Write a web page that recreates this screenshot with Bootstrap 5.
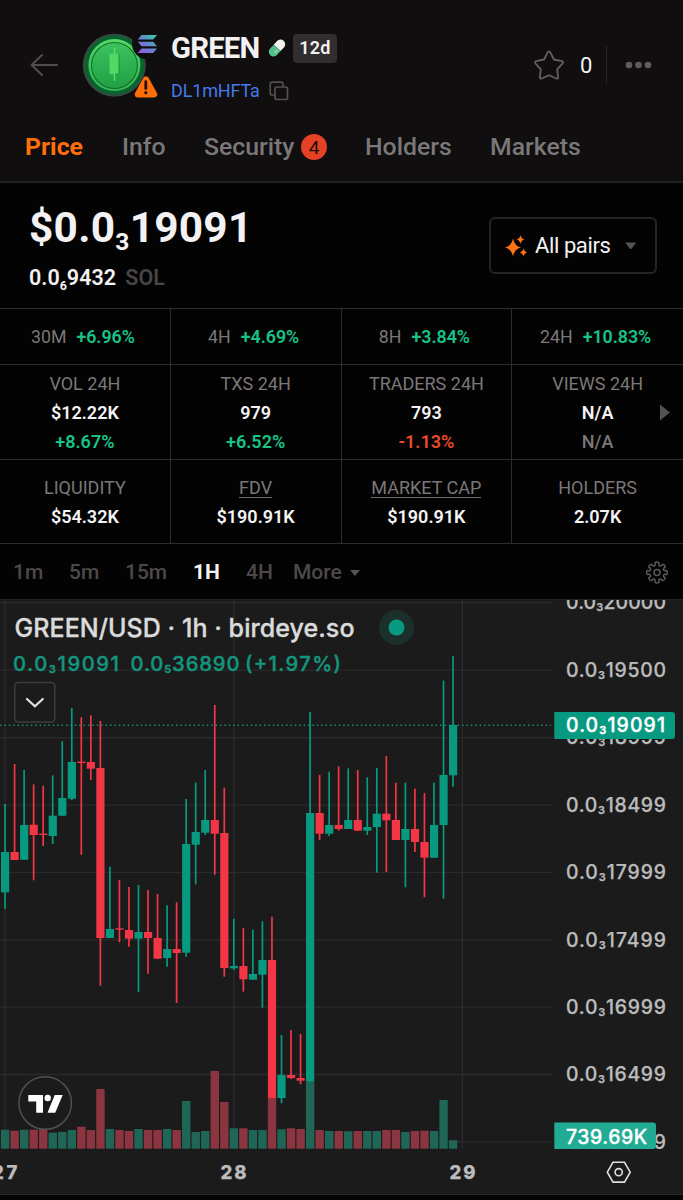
<!DOCTYPE html>
<html lang="en" data-bs-theme="dark">
<head>
<meta charset="utf-8">
<meta name="viewport" content="width=device-width, initial-scale=1">
<title>GREEN price</title>
<link href="https://cdn.jsdelivr.net/npm/bootstrap@5.3.0/dist/css/bootstrap.min.css" rel="stylesheet">
<style>
  body { background: #030303; color: #f3f1f2; font-family: Roboto, "Liberation Sans", sans-serif; height: 1200px; overflow: hidden; }
  svg { display: block; flex: none; }
  .fit { white-space: nowrap; line-height: 1; }
  .token-head { height: 183px; background: #100e0f; border-bottom: 2px solid #212020; }
  .head-row { height: 130px; padding: 0 30px; }
  .logo-box { width: 78px; height: 70px; margin-left: 23px; }
  .token-text { margin-left: 12px; height: 130px; padding-top: 33px; gap: 17px; }
  .token-name { font-size: 29.3px; font-weight: 700; letter-spacing: -.8px; width: 97px; padding-top: 2px; }
  .age { background: #332e2e; border-radius: 4px; width: 44px; height: 29px; font-size: 18px; font-weight: 600; letter-spacing: .2px; margin-left: 7px; }
  .addr { color: #4679ea; font-size: 18px; letter-spacing: -.15px; width: 98px; }
  .line-1 { height: 30px; } .line-2 { height: 21px; }
  .head-rule { width: 1px; height: 38px; background: #282626; }
  .tabs-row { height: 34px; padding-left: 25px; font-size: 24.8px; font-weight: 500; color: #7a7878; }
  .tabs-row > :not(.count) { padding-top: 1.5px; }
  .count { width: 26px; height: 26px; border-radius: 50%; background: #e64124; color: #1a0c09; font-size: 19px; font-weight: 400; }
  .price-block { height: 125px; padding: 0 26px 0 29px; }
  .price { font-size: 42.4px; font-weight: 700; letter-spacing: .25px; padding-top: 24px; }
  .price small, .sol-price small { font-size: .58em; position: relative; top: .33em; font-weight: 700; line-height: 0; }
  .sol-price { font-size: 21.5px; font-weight: 600; margin-top: 18px; }
  .sol-price span { color: #484546; margin-left: 4px; }
  .pairs { width: 168px; height: 57px; border: 2px solid #252323; border-radius: 6px; margin-top: 34px; padding: 0 19px 0 14px; font-size: 22px; color: #f4f2f3; }
  .stats { border-top: 1px solid #2e2c2d; font-size: 18px; }
  .stats .cell { border-right: 1px solid #2e2c2d; border-bottom: 1px solid #2e2c2d; position: relative; }
  .stats .cell:nth-child(4n) { border-right: 0; }
  .r1 { height: 56px; font-size: 17.8px; gap: 10px; padding-right: 4px; } .r2 { height: 95px; gap: 11px; padding-top: 2px; } .r3 { height: 84px; gap: 11px; padding-top: 2px; }
  .dim { color: #7b7779; }
  .val { font-weight: 600; color: #f5f3f4; }
  .up { color: #17c387; font-weight: 600; } .down { color: #ed4a2b; font-weight: 600; }
  .ul { box-shadow: 0 1px #6f6b6d; }
  .next { position: absolute; right: 13px; top: 39px; }
  .ranges { height: 55px; padding: 2px 14px 0 13px; font-size: 21px; font-weight: 500; color: #4d494a; }
  .chart { position: relative; height: 596px; background: #1b1b1b; overflow: hidden; border-top: 1px solid #242424; border-bottom: 1px solid #292929; }
  .chart text { font-family: Inter, sans-serif; font-weight: 500; font-size: 19.4px; fill: #bcbcbc; stroke: #bcbcbc; stroke-width: .25px; }
  .chart text.lg { font-size: 20.2px; fill: #15957e; stroke: #15957e; stroke-width: .4px; }
  .chart text.ttl { font-size: 25px; fill: #dbdbdb; stroke: #dbdbdb; stroke-width: .35px; }
  .chart text.tag { fill: #fff; stroke: #fff; stroke-width: .35px; }
  .chart text.day { font-size: 18.5px; font-weight: 800; }
  .chart .subn { font-size: 11px; font-weight: 600; }
</style>
</head>
<body>
<header class="token-head">
  <div class="head-row d-flex align-items-center">
    <svg width="28" height="24" fill="none" stroke="#504d4e" stroke-width="2" stroke-linecap="round" stroke-linejoin="round"><path d="M27 12H1.5M12 2 1.5 12 12 22"/></svg>
    <div class="logo-box">
      <svg width="78" height="70" viewBox="81 30.3 78 70">
        <defs>
          <linearGradient id="coin" x1="0" y1="0" x2="0" y2="1"><stop offset="0" stop-color="#3cc35e"/><stop offset="1" stop-color="#1fa044"/></linearGradient>
          <linearGradient id="edge" x1="0" y1="0" x2="0" y2="1"><stop offset="0" stop-color="#56da66"/><stop offset="1" stop-color="#36b653"/></linearGradient>
          <linearGradient id="sol" x1="0" y1="1" x2="1" y2="0" gradientUnits="userSpaceOnUse" gradientTransform="translate(138 35) scale(18)"><stop offset="0" stop-color="#9857ea"/><stop offset=".5" stop-color="#6683d0"/><stop offset="1" stop-color="#35d3a1"/></linearGradient>
        </defs>
        <circle cx="114.3" cy="65.5" r="31.5" fill="#3d4742"/>
        <circle cx="114.6" cy="65.4" r="29.9" fill="#096331"/>
        <circle cx="114.4" cy="65.4" r="26" fill="url(#edge)"/>
        <circle cx="114.4" cy="65.8" r="23" fill="url(#coin)" stroke="#12702d" stroke-width="1.1"/>
        <path d="M114.5 48v33" stroke="#5fe36b" stroke-width="1.3"/>
        <rect x="109.5" y="54" width="9.5" height="20.5" fill="#50d965"/>
        <path d="M119 54v20.5h-4" stroke="#218f3b" fill="none"/>
        <circle cx="147.5" cy="44" r="15.5" fill="#100e0f"/>
        <g fill="url(#sol)"><path d="M141.5 35.2H157l-3.8 4.6h-15.5z"/><path d="M137.7 42h15.5l3.8 4.6h-15.5z"/><path d="M141.5 48.8H157l-3.8 4.6h-15.5z"/></g>
        <path d="M146 80l8 14.5h-16z" fill="#fe6d08" stroke="#fe6d08" stroke-width="6.5" stroke-linejoin="round"/>
        <path d="M145.8 82v6.8" stroke="#211006" stroke-width="2.8" stroke-linecap="round"/><circle cx="145.8" cy="93" r="1.6" fill="#211006"/>
      </svg>
    </div>
    <div class="token-text flex-grow-1 d-flex flex-column">
      <div class="line-1 d-flex align-items-center">
        <span class="fit token-name">GREEN</span>
        <svg width="18" height="20" viewBox="0 0 18 20"><g transform="rotate(43 9 10)"><path d="M4.300 9.8V4.9a4.700 4.700 0 0 1 9.400 0v4.9z" fill="#f0f2ef"/><path d="M4.300 9.8v5.3a4.700 4.700 0 0 0 9.400 0V9.8z" fill="#52bf8b"/><path d="M10.8 11v4" stroke="#b8dfcc" stroke-width="1.2"/></g></svg>
        <span class="age fit d-flex align-items-center justify-content-center">12d</span>
      </div>
      <div class="line-2 d-flex align-items-center">
        <span class="fit addr">DL1mHFTa</span>
        <svg width="20" height="20" fill="none" stroke="#514e4e" stroke-width="1.7"><rect x="6" y="6" width="12.5" height="12.5" rx="2"/><path d="M6 14H3.2A2 2 0 0 1 1.2 12V3.2a2 2 0 0 1 2-2H12a2 2 0 0 1 2 2V6"/></svg>
      </div>
    </div>
    <div class="d-flex align-items-center">
      <svg width="32" height="32" viewBox="0 -.5 32 32" fill="none" stroke="#625f60" stroke-width="1.8" stroke-linejoin="round"><path d="M14.7 2.8q1.3-2 2.6 0l3.6 7.2 8 1.7q1.8.6.7 2.1l-5.4 6 .9 8q0 1.8-1.8 1.2L16 25.8 8.7 29q-1.8.6-1.8-1.2l.9-8-5.4-6q-1.1-1.5.7-2.1l8-1.7z"/></svg>
      <span class="fit" style="font-size:22px;margin-left:15px;width:26px;padding-top:2px">0</span>
      <span class="head-rule"></span>
      <svg width="28" height="8" fill="#5f5c5d" style="margin-left:18px"><circle cx="4" cy="4" r="3.3"/><circle cx="13.5" cy="4" r="3.3"/><circle cx="23" cy="4" r="3.3"/></svg>
    </div>
  </div>
  <nav class="tabs-row d-flex align-items-center">
    <span class="fit fw-bold" style="width:97px;color:#fe6e0a">Price</span>
    <span class="fit" style="width:82px">Info</span>
    <span class="fit" style="width:97px">Security</span>
    <span class="count fit d-flex align-items-center justify-content-center">4</span>
    <span class="fit" style="margin-left:38px;width:125px">Holders</span>
    <span class="fit">Markets</span>
  </nav>
</header>

<section class="price-block d-flex justify-content-between align-items-start">
  <div>
    <div class="fit price">$0.0<small>3</small>19091</div>
    <div class="fit sol-price">0.0<small>6</small>9432 <span>SOL</span></div>
  </div>
  <div class="pairs d-flex align-items-center">
    <svg width="22" height="24" fill="#fe7315"><path d="M8 4.5Q9.5 12 16 13.5 9.5 15 8 22.500 6.500 15 0 13.500 6.500 12 8 4.500zM15.500 1q.8 3.700 4 4.500-3.200.8-4 4.500-.8-3.700-4-4.500 3.200-.8 4-4.500zM18.500 14.500q.8 3.200 3.500 4-2.700.8-3.500 4-.8-3.200-3.500-4 2.700-.8 3.500-4z"/></svg>
    <span class="fit" style="margin-left:8px;letter-spacing:-.4px">All pairs</span>
    <svg class="ms-auto" width="11" height="8" fill="#565354"><path d="M1 1h9.500L5.700 7z" stroke="#565354" stroke-linejoin="round"/></svg>
  </div>
</section>

<section class="stats row row-cols-4 g-0">
  <div class="cell r1 col d-flex align-items-center justify-content-center"><span class="fit dim">30M</span><span class="fit up">+6.96%</span></div>
  <div class="cell r1 col d-flex align-items-center justify-content-center"><span class="fit dim">4H</span><span class="fit up">+4.69%</span></div>
  <div class="cell r1 col d-flex align-items-center justify-content-center"><span class="fit dim">8H</span><span class="fit up">+3.84%</span></div>
  <div class="cell r1 col d-flex align-items-center justify-content-center"><span class="fit dim">24H</span><span class="fit up">+10.83%</span></div>

  <div class="cell r2 col d-flex flex-column align-items-center justify-content-center"><span class="fit dim">VOL 24H</span><span class="fit val">$12.22K</span><span class="fit up">+8.67%</span></div>
  <div class="cell r2 col d-flex flex-column align-items-center justify-content-center"><span class="fit dim">TXS 24H</span><span class="fit val">979</span><span class="fit up">+6.52%</span></div>
  <div class="cell r2 col d-flex flex-column align-items-center justify-content-center"><span class="fit dim">TRADERS 24H</span><span class="fit val">793</span><span class="fit down">-1.13%</span></div>
  <div class="cell r2 col d-flex flex-column align-items-center justify-content-center"><span class="fit dim">VIEWS 24H</span><span class="fit val">N/A</span><span class="fit dim fw-medium">N/A</span>
    <svg class="next" width="10" height="17" fill="#555253"><path d="M0 0.500 10 8.500 0 16.500z"/></svg></div>

  <div class="cell r3 col d-flex flex-column align-items-center justify-content-center"><span class="fit dim">LIQUIDITY</span><span class="fit val">$54.32K</span></div>
  <div class="cell r3 col d-flex flex-column align-items-center justify-content-center"><span class="fit dim ul">FDV</span><span class="fit val">$190.91K</span></div>
  <div class="cell r3 col d-flex flex-column align-items-center justify-content-center"><span class="fit dim ul">MARKET CAP</span><span class="fit val">$190.91K</span></div>
  <div class="cell r3 col d-flex flex-column align-items-center justify-content-center"><span class="fit dim">HOLDERS</span><span class="fit val">2.07K</span></div>
</section>

<nav class="ranges d-flex align-items-center">
  <span class="fit" style="width:56px">1m</span><span class="fit" style="width:56px">5m</span><span class="fit" style="width:68px">15m</span>
  <span class="fit fw-bold" style="width:53px;color:#f3f1f2">1H</span><span class="fit" style="width:47px">4H</span><span class="fit">More</span>
  <svg width="12" height="8" fill="#565354" style="margin-left:7px"><path d="M1 1h10L6 7z"/></svg>
  <svg class="ms-auto" width="24" height="24" viewBox="-12 -11.5 24 24" fill="none" stroke="#5a5758" stroke-width="1.5" stroke-linejoin="round"><path id="gear"/><circle r="3"/></svg>
</nav>

<section class="chart">
  <svg width="683" height="595" viewBox="0 600 683 595" id="plot"></svg>
</section>

<script src="https://cdn.jsdelivr.net/npm/bootstrap@5.3.0/dist/js/bootstrap.bundle.min.js"></script>
<script>
  // Gear with eight rounded teeth
  let g = '';
  for (let i = 0; i < 8; i++) {
    const p = (r, d) => { const a = (i * 45 + d) * Math.PI / 180; return (r * Math.cos(a)).toFixed(2) + ' ' + (r * Math.sin(a)).toFixed(2); };
    g += (i ? 'L' : 'M') + p(7.6, -14) + 'L' + p(10, -11) + 'Q' + p(11, 0) + ' ' + p(10, 11) + 'L' + p(7.6, 14) + 'Q' + p(6.6, 22.5) + ' ' + p(7.6, 31);
  }
  document.getElementById('gear').setAttribute('d', g + 'Z');

  // Hourly candles: direction, high, body top, body bottom, low, volume top
  const candles = [
    ['g',804,852,892.3,909,1129.7],['r',764,852,860,860,1130.7],['g',770,825,859.7,860,1129.7],['r',784.300,824.7,835,880.300,1129.7],
    ['r',785.7,833.6,835,846,1129.3],['g',775.3,815.7,836,844,1132.7],['g',741.3,798,815.7,816,1132],['g',708,762,798.7,800,1130],
    ['r',717.3,761.6,763,854.7,1126.7],['r',715.3,762,768.7,780,1130],['r',721,768,938,985.7,1089],['g',866.7,929,938,938,1129],
    ['r',880,928.3,929.7,942.3,1130],['r',887,930,938.7,946.7,1131],['g',885,932,938.7,992,1129],['r',890,932,938,973.7,1130],
    ['r',894,938,958.7,959,1130],['g',905.3,949,958,966.7,1129],['r',902.3,949,953,1003,1130],['g',799,844,952.7,956.7,1101],
    ['g',782.7,832,844.7,884.3,1132],['g',770,820,832.7,835,1131],['r',705,820,833.7,874.7,1071],['r',787.7,833,968,976.7,1102],
    ['g',918.7,966,968.3,970,1128.3],['r',928,966,979.3,991.7,1128.3],['g',929.7,974,979.7,980,1130],['g',921.3,960,974.7,1007.7,1130],
    ['r',916.7,960,1098,1098,1098],['g',1035,1075,1098,1103.3,1129.3],['r',1030,1075,1078,1079,1128.3],['r',1034,1078,1080.7,1084.3,1129],
    ['g',712,813,1081,1082,1081],['r',775,813,833.7,840,1130],['g',771.7,825,833.7,836,1131],['r',766.3,825,829,830.7,1131],
    ['g',768.3,820,829,829,1131.3],['r',770,820,830.7,831,1131],['g',777.3,827,830.7,835,1131],['g',768,813.7,827,872.7,1131],
    ['r',756,813.7,820.3,872,1130],['r',782.7,820,840,840,1130],['g',782.7,829,840,887.3,1132],['r',788.7,829,842,852,1131],
    ['r',793,842,857.7,897.3,1130.7],['g',782.7,825,857.7,858,1131],['g',680.7,775,825,898.7,1100],['g',656,725,775.3,786.7,1140.3]
  ];
  let s = '';
  const grid = 'fill="none" stroke="#2b2b2b" stroke-width="1.3"';
  const ys = [602.6, 670.2, 737.6, 805.2, 872.4, 939.8, 1007.2, 1074.5, 1141.8];
  ys.forEach(y => s += `<path ${grid} d="M0 ${y}H553"/>`);
  [5, 234, 462.4].forEach(x => s += `<path ${grid} d="M${x} 600V1148.500"/>`);
  candles.forEach((c, i) => {
    const x = 5 + i * 9.532, v = c[0] === 'g' ? '#1f6656' : '#8b3540', k = c[0] === 'g' ? '#089981' : '#f23645';
    s += `<rect x="${x - 4.100}" y="${c[5]}" width="8.400" height="${1148.700 - c[5]}" fill="${v}"/>`;
    s += `<rect x="${x - .8}" y="${c[1]}" width="1.700" height="${c[4] - c[1]}" fill="${k}"/>`;
    s += `<rect x="${x - 4}" y="${c[2]}" width="8.200" height="${c[3] - c[2]}" fill="${k}"/>`;
  });
  s += '<path d="M0 725.200H551" stroke="#168c76" stroke-width="1.500" stroke-dasharray="1.500 2.900"/>';

  const t = (x, y, w, str, cls) => `<text x="${x}" y="${y}" textLength="${w}" class="${cls}">${str}</text>`;
  const price = (x, y, sub, rest, w, cls = '') =>
    `<text x="${x}" y="${y}" textLength="${w}" class="${cls}">0.0<tspan class="subn" dy="2">${sub}</tspan><tspan dy="-2">${rest}</tspan></text>`;
  ['20000','19500','18999','18499','17999','17499','16999','16499','15999'].forEach((p, i) => s += price(566, ys[i] + 6.700, 3, p, 100));

  // Last price and volume tags; the price scale ends where the date axis begins
  s += '<rect x="554" y="1149" width="129" height="6" fill="#1b1b1b"/>';
  s += '<path d="M554.300 712H672a3 3 0 0 1 3 3v21a3 3 0 0 1-3 3H554.300z" fill="#089981"/>' + price(566, 732, 3, '19091', 99, 'tag');
  s += '<path d="M554.300 1122.500H653a3 3 0 0 1 3 3v20.500a3 3 0 0 1-3 3H554.300z" fill="#22ab94"/>' + t(566, 1143.500, 81, '739.69K', 'tag');

  // Legend
  s += t(14.500, 636.800, 340, 'GREEN/USD · 1h · birdeye.so', 'ttl');
  s += '<circle cx="396.500" cy="627.500" r="17.500" fill="#1c302b"/><circle cx="396.500" cy="627.500" r="8" fill="#089981"/>';
  s += price(13, 670.700, 3, '19091', 106, 'lg') + price(130.500, 670.700, 5, '36890', 109, 'lg') + t(245, 670.700, 96, '(+1.97%)', 'lg');
  s += '<rect x="14.800" y="682.500" width="40" height="39.500" rx="3.500" fill="#1b1b1b" stroke="#3c3c3c" stroke-width="1.500"/><path d="M27 699l7.900 7.300 7.900-7.300" fill="none" stroke="#e2e2e2" stroke-width="2.200" stroke-linecap="round"/>';

  // TradingView mark
  s += '<circle cx="45.200" cy="1103" r="26.300" fill="#1b1b1b" stroke="#505050" stroke-width="1.500"/><g fill="#fff"><path d="M28.300 1095H43v17.800h-6.800v-11.300h-7.900z"/><circle cx="47.700" cy="1098" r="3.200"/><path d="M54.700 1095h8l-7.500 17.800h-7.700z"/></g>';

  // Date axis
  s += t(-8, 1179.300, 25.500, '27', 'day') + t(220.500, 1179.300, 26, '28', 'day') + t(449.500, 1179.300, 26, '29', 'day');
  s += '<g fill="none" stroke="#dedede" stroke-width="1.600"><path d="M613 1162.300h11.500l5.700 9.900-5.700 9.900H613l-5.700-9.900z"/><circle cx="618.700" cy="1172.200" r="3.600"/></g>';
  document.getElementById('plot').innerHTML = s;
</script>
</body>
</html>
